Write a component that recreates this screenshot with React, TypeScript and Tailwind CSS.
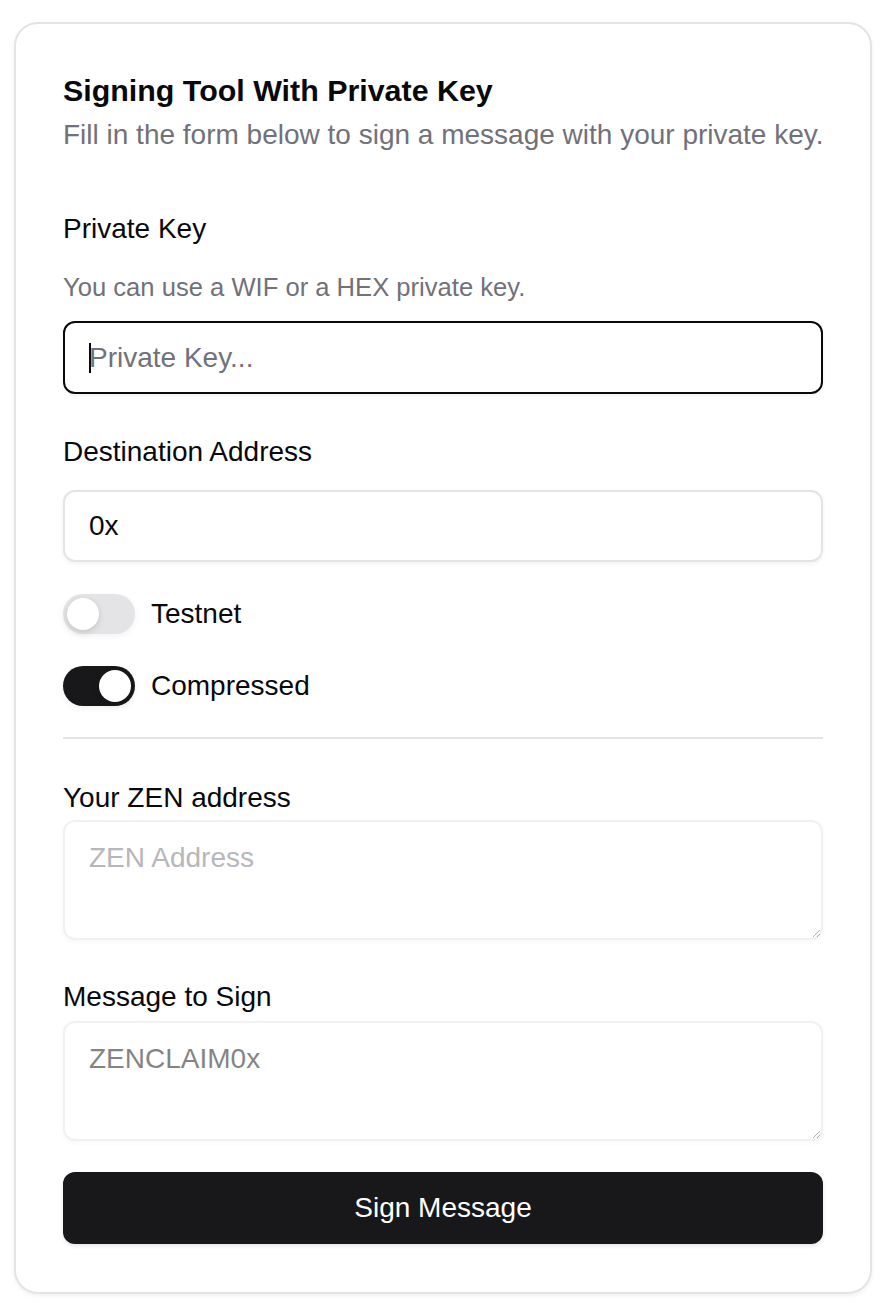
import { useState } from "react";

function Toggle({ checked, onChange, label }: { checked: boolean; onChange: (v: boolean) => void; label: string }) {
  return (
    <div className="flex items-center gap-4">
      <button
        type="button"
        role="switch"
        aria-checked={checked}
        onClick={() => onChange(!checked)}
        className={`flex h-10 w-[72px] shrink-0 items-center rounded-full border-4 border-transparent shadow-[0_2px_6px_rgba(0,0,0,0.06)] ${
          checked ? "bg-[#18181b]" : "bg-[#e4e4e7]"
        }`}
      >
        <span
          className={`block h-8 w-8 rounded-full bg-white shadow-[0_2px_6px_rgba(0,0,0,0.15)] ${
            checked ? "translate-x-8" : "translate-x-0"
          }`}
        />
      </button>
      <span className="text-[28px] leading-[40px] text-[#09090b]">{label}</span>
    </div>
  );
}

export default function App() {
  const [testnet, setTestnet] = useState(false);
  const [compressed, setCompressed] = useState(true);

  return (
    <div className="min-h-[1311px] bg-white pt-[22px] [font-family:'Liberation_Sans',Arial,sans-serif] text-[#09090b]">
      <div className="ml-[14px] flex w-[858px] flex-col rounded-[24px] border-2 border-[#e4e4e7] bg-white px-[47px] pb-[48px] pt-[51px] shadow-[0_2px_4px_rgba(0,0,0,0.06)]">
        <h3 className="text-[30.4px] font-bold leading-[30px]">Signing Tool With Private Key</h3>
        <p className="mt-[10px] whitespace-nowrap text-[28px] leading-[40px] text-[#71717a]">
          Fill in the form below to sign a message with your private key.
        </p>

        <label className="mt-[54px] text-[28px] leading-[40px]">Private Key</label>
        <p className="mt-[22px] text-[25.6px] leading-[32px] text-[#71717a]">You can use a WIF or a HEX private key.</p>
        <div className="relative mt-[18px]">
          <input
            className="h-[73px] w-full rounded-[12px] border-2 border-[#09090b] bg-white px-6 text-[28px] shadow-[0_2px_4px_rgba(0,0,0,0.05)] outline-none placeholder:text-[#71717a]"
            placeholder="Private Key..."
          />
          <span className="pointer-events-none absolute left-[26px] top-[22px] h-[30px] w-[2px] bg-[#09090b]" />
        </div>

        <label className="mt-[38px] text-[28px] leading-[40px]">Destination Address</label>
        <input
          className="mt-[18px] h-[72px] w-full rounded-[12px] border-2 border-[#e4e4e7] bg-white px-6 text-[28px] text-[#09090b] shadow-[0_2px_4px_rgba(0,0,0,0.05)] outline-none"
          defaultValue="0x"
        />

        <div className="mt-[32px]">
          <Toggle checked={testnet} onChange={setTestnet} label="Testnet" />
        </div>
        <div className="mt-[32px]">
          <Toggle checked={compressed} onChange={setCompressed} label="Compressed" />
        </div>

        <div className="mt-[31px] h-[2px] w-full bg-[#e4e4e7]" />

        <label className="mt-[39px] text-[28px] leading-[40px]">Your ZEN address</label>
        <textarea
          disabled
          className="mt-[2px] h-[120px] w-full rounded-[12px] border-2 border-[#e4e4e7] bg-white px-6 py-4 text-[28px] leading-[40px] opacity-50 shadow-[0_2px_4px_rgba(0,0,0,0.05)] outline-none placeholder:text-[#71717a]"
          placeholder="ZEN Address"
        />

        <label className="mt-[37px] text-[28px] leading-[40px]">Message to Sign</label>
        <textarea
          disabled
          className="mt-[4px] h-[120px] w-full rounded-[12px] border-2 border-[#e4e4e7] bg-white px-6 py-4 text-[28px] leading-[40px] text-[#09090b] opacity-50 shadow-[0_2px_4px_rgba(0,0,0,0.05)] outline-none"
          defaultValue="ZENCLAIM0x"
        />

        <button
          type="button"
          className="mt-[31px] h-[72px] w-full rounded-[12px] bg-[#18181b] text-[28px] text-white shadow-[0_2px_4px_rgba(0,0,0,0.1)]"
        >
          Sign Message
        </button>
      </div>
    </div>
  );
}
